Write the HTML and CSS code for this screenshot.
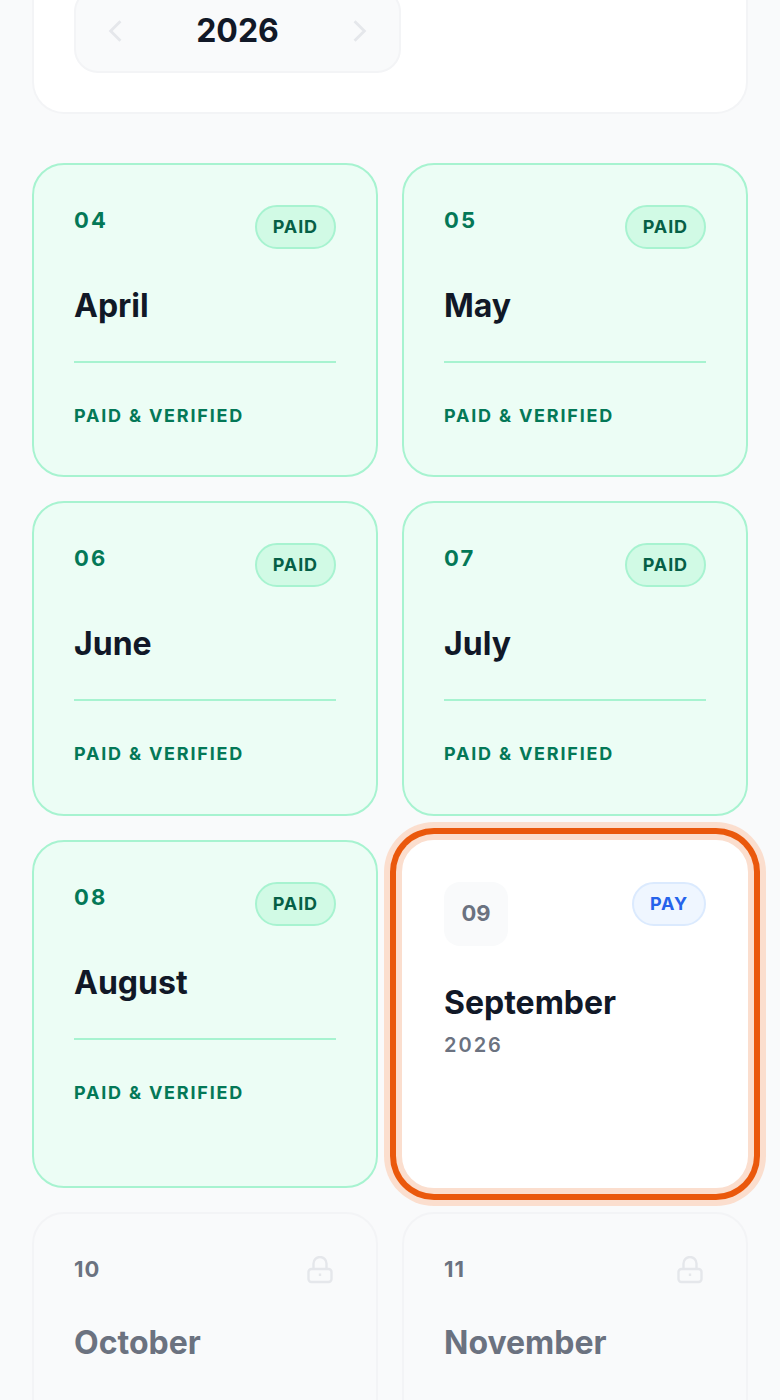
FILE: index.html
```html
<!DOCTYPE html>
<html lang="en">
<head>
    <meta charset="UTF-8">
    <meta name="viewport" content="width=device-width, initial-scale=1.0">
    <title>Monthly Payments</title>
    <link rel="stylesheet" href="styles.css">
</head>
<body>
    <div class="page">
        <div class="year-panel">
            <div class="year-nav">
                <svg class="chevron" viewBox="0 0 14 22"><path d="M12 2 L3 11 L12 20"/></svg>
                <span class="year">2026</span>
                <svg class="chevron" viewBox="0 0 14 22"><path d="M2 2 L11 11 L2 20"/></svg>
            </div>
        </div>

        <div class="months">
            <div class="month paid">
                <div class="month-head">
                    <span class="num">04</span>
                    <span class="badge">PAID</span>
                </div>
                <div class="name">April</div>
                <div class="status">PAID &amp; VERIFIED</div>
            </div>
            <div class="month paid">
                <div class="month-head">
                    <span class="num">05</span>
                    <span class="badge">PAID</span>
                </div>
                <div class="name">May</div>
                <div class="status">PAID &amp; VERIFIED</div>
            </div>
            <div class="month paid">
                <div class="month-head">
                    <span class="num">06</span>
                    <span class="badge">PAID</span>
                </div>
                <div class="name">June</div>
                <div class="status">PAID &amp; VERIFIED</div>
            </div>
            <div class="month paid">
                <div class="month-head">
                    <span class="num">07</span>
                    <span class="badge">PAID</span>
                </div>
                <div class="name">July</div>
                <div class="status">PAID &amp; VERIFIED</div>
            </div>
            <div class="month paid">
                <div class="month-head">
                    <span class="num">08</span>
                    <span class="badge">PAID</span>
                </div>
                <div class="name">August</div>
                <div class="status">PAID &amp; VERIFIED</div>
            </div>
            <div class="month current">
                <div class="month-head">
                    <span class="chip">09</span>
                    <span class="badge pay">PAY</span>
                </div>
                <div class="name">September</div>
                <div class="sub">2026</div>
            </div>
            <div class="month locked">
                <div class="month-head">
                    <span class="num">10</span>
                    <svg class="lock" viewBox="0 0 26 28"><rect x="1.5" y="13" width="23" height="13" rx="3"/><path d="M6.5 13 V7.5 a6.5 6.5 0 0 1 13 0 V13"/><path d="M13 17.5 V20"/></svg>
                </div>
                <div class="name">October</div>
            </div>
            <div class="month locked">
                <div class="month-head">
                    <span class="num">11</span>
                    <svg class="lock" viewBox="0 0 26 28"><rect x="1.5" y="13" width="23" height="13" rx="3"/><path d="M6.5 13 V7.5 a6.5 6.5 0 0 1 13 0 V13"/><path d="M13 17.5 V20"/></svg>
                </div>
                <div class="name">November</div>
            </div>
        </div>
    </div>
</body>
</html>
```

FILE: styles.css
```css
html, body {
    margin: 0;
    padding: 0;
    height: 1400px;
    overflow: hidden;
}

body {
    font-family: 'Inter', sans-serif;
    background: #f9fafb;
    color: #111827;
}

.page {
    padding: 0 32px;
}

.year-panel {
    background: #fff;
    border: 2px solid #f3f4f6;
    border-top: none;
    border-radius: 0 0 32px 32px;
    padding: 0 40px 38.5px;
    margin-bottom: 49.4px;
}

.year-nav {
    width: 327px;
    height: 85px;
    margin-top: -12px;
    box-sizing: border-box;
    background: #f9fafb;
    border: 2px solid #f3f4f6;
    border-radius: 24px;
    display: flex;
    align-items: center;
    justify-content: space-between;
    padding: 0 31px;
}

.year {
    font-size: 32px;
    font-weight: 700;
    color: #111827;
}

.chevron {
    width: 16px;
    height: 24px;
    fill: none;
    stroke: #e5e7eb;
    stroke-width: 2.6;
}

.months {
    display: grid;
    grid-template-columns: 1fr 1fr;
    gap: 24px;
}

.month {
    box-sizing: border-box;
    border: 2px solid #f3f4f6;
    border-radius: 32px;
    padding: 40px;
    min-width: 0;
}

.month-head {
    display: flex;
    justify-content: space-between;
    align-items: flex-start;
}

.num {
    font-size: 22px;
    font-weight: 700;
    line-height: 30px;
}

.badge {
    box-sizing: border-box;
    height: 44px;
    padding: 0 16px;
    border-radius: 22px;
    font-size: 18px;
    font-weight: 700;
    letter-spacing: 0.9px;
    line-height: 40px;
}

.name {
    font-size: 32px;
    font-weight: 700;
    line-height: 40px;
    margin-top: 37px;
}

/* paid months */
.paid {
    background: #ecfdf5;
    border-color: #a7f3d0;
    min-height: 314.5px;
}

.paid .num {
    color: #047857;
    letter-spacing: 2.2px;
}

.paid .badge {
    background: #d1fae5;
    border: 2px solid #a7f3d0;
    color: #065f46;
}

.status {
    margin-top: 35px;
    border-top: 2px solid #a7f3d0;
    padding-top: 41px;
    font-size: 18px;
    font-weight: 700;
    line-height: 24px;
    letter-spacing: 1.8px;
    color: #047857;
}

/* current month */
.current {
    background: #fff;
    border-color: #fff;
    box-shadow: 0 0 0 6px #fbdece, 0 0 0 12px #ea580c, 0 0 0 18px #fbdece;
    min-height: 348.5px;
}

.chip {
    box-sizing: border-box;
    width: 64px;
    height: 64px;
    padding-bottom: 2px;
    border-radius: 16px;
    background: #f9fafb;
    color: #6b7280;
    font-size: 22px;
    font-weight: 700;
    display: flex;
    align-items: center;
    justify-content: center;
}

.badge.pay {
    background: #eff6ff;
    border: 2px solid #dbeafe;
    color: #2563eb;
}

.sub {
    margin-top: 8px;
    font-size: 20px;
    font-weight: 600;
    line-height: 28px;
    letter-spacing: 2px;
    color: #6b7280;
}

/* locked months */
.locked {
    background: #f9fafb;
    min-height: 300px;
}

.locked .num {
    color: #6b7280;
    letter-spacing: 1.1px;
}

.locked .name {
    color: #6b7280;
    margin-top: 39px;
}

.lock {
    width: 26px;
    height: 28px;
    margin: 2px 3px 0 0;
    fill: none;
    stroke: #e5e7eb;
    stroke-width: 2.4;
}
```
